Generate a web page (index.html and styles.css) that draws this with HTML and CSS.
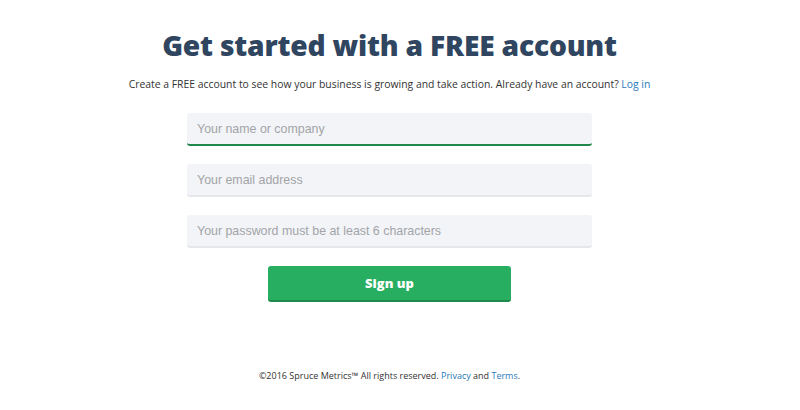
FILE: index.html
```html
<!DOCTYPE html>
<html lang="en">
<head>
  <meta charset="UTF-8" />
  <title>Sign up - Spruce Metrics</title>
  <link rel="stylesheet" href="styles.css">
</head>
<body>

  <div class="page">
    <h1>Get started with a FREE account</h1>
    <p class="lead">Create a FREE account to see how your business is growing and take action. Already have an account? <a href="#">Log in</a></p>

    <form class="signup">
      <input type="text" class="active" placeholder="Your name or company" />
      <input type="email" placeholder="Your email address" />
      <input type="password" placeholder="Your password must be at least 6 characters" />
      <button type="button">Sign up</button>
    </form>
  </div>

  <footer class="footer">
    ©2016 Spruce Metrics™ All rights reserved. <a href="#">Privacy</a> and <a href="#">Terms</a>.
  </footer>

</body>
</html>
```

FILE: styles.css
```css
* {
  box-sizing: border-box;
}
body {
  margin: 0;
  padding-right: 21px;
  background: #fff;
  color: #333;
  font-family: 'Open Sans', sans-serif;
}
a {
  color: #2a7ab8;
  text-decoration: none;
}
.page {
  display: flex;
  flex-direction: column;
  align-items: center;
  padding-top: 23px;
}
h1 {
  margin: 0;
  font-size: 28.2px;
  font-weight: 800;
  color: #2f4560;
  letter-spacing: -0.2px;
  line-height: 44px;
}
.lead {
  margin: 9px 0 0;
  font-size: 10.4px;
  line-height: 16px;
}
.signup {
  display: flex;
  flex-direction: column;
  align-items: center;
  gap: 18px;
  margin-top: 21px;
}
input {
  width: 405px;
  height: 33px;
  padding: 0 10px;
  border: none;
  border-bottom: 2px solid #e6e7ea;
  border-radius: 3px;
  background: #f3f4f7;
  font-family: 'Liberation Sans', sans-serif;
  font-size: 12.4px;
  color: #333;
  outline: none;
}
input::placeholder {
  color: #a2a4a8;
}
input.active {
  border-bottom-color: #21874a;
}
button {
  width: 243px;
  height: 36px;
  border: none;
  border-bottom: 2px solid #1f8a4b;
  border-radius: 3px;
  background: #27ae60;
  color: #fff;
  font-family: 'Open Sans', sans-serif;
  font-size: 13px;
  font-weight: 800;
}
.footer {
  margin-top: 67px;
  text-align: center;
  font-size: 9px;
  color: #333;
}
```
